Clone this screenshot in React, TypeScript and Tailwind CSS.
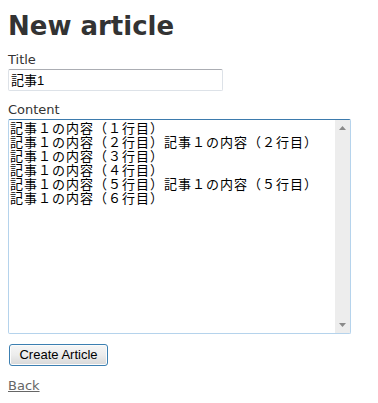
const lines = [
  "記事１の内容（１行目）",
  "記事１の内容（２行目）記事１の内容（２行目）",
  "記事１の内容（３行目）",
  "記事１の内容（４行目）",
  "記事１の内容（５行目）記事１の内容（５行目）",
  "記事１の内容（６行目）",
];

function ScrollArrow({ up }: { up: boolean }) {
  return (
    <svg width="7" height="4" viewBox="0 0 7 4" className="block">
      {up ? <path d="M3.5 0 L7 4 L0 4 Z" fill="#8a8a8a" /> : <path d="M0 0 L7 0 L3.5 4 Z" fill="#8a8a8a" />}
    </svg>
  );
}

export default function App() {
  return (
    <div
      className="w-[378px] h-[403px] bg-white text-[#333] text-[13px] leading-[18px] pl-2 overflow-hidden"
      style={{ fontFamily: '"DejaVu Sans", Verdana, sans-serif' }}
    >
      <h1 className="mt-[17px] h-[18px] text-[26px] leading-[18px] font-bold">New article</h1>

      {/* Title field */}
      <div className="mt-[16px]">
        <div className="h-[18px]">Title</div>
        <div
          className="w-[215px] h-[22px] border border-[#dde2e8] border-t-[#abadb3] rounded-[2px] px-[2px] text-[13px] leading-[21px] text-black"
          style={{ fontFamily: '"Liberation Sans", "Noto Sans CJK JP", sans-serif' }}
        >
          記事1
        </div>
      </div>

      {/* Content field */}
      <div className="mt-[10px]">
        <div className="h-[18px]">Content</div>
        <div className="w-[343px] h-[215px] border border-[#b5d3ec] border-t-[#3d7bad] rounded-[2px] flex">
          <div
            className="flex-1 pl-[1px] pt-[1px] text-[13px] leading-[14px] tracking-[1px] text-black whitespace-pre"
            style={{ fontFamily: '"Noto Sans CJK JP", monospace' }}
          >
            {lines.map((l, i) => (
              <div key={i} className="h-[14px]">{l}</div>
            ))}
          </div>
          <div className="w-[16px] bg-[#ededed] border-l border-white flex flex-col items-center justify-between py-[6px]">
            <ScrollArrow up />
            <ScrollArrow up={false} />
          </div>
        </div>
      </div>

      {/* Submit */}
      <div className="mt-[10px] ml-px">
        <button
          className="w-[99px] h-[22px] rounded-[3px] border border-[#3c7fb1] bg-gradient-to-b from-[#f6f6f6] via-[#ececec] to-[#d8d8d8] text-[13px] text-black shadow-[inset_0_0_0_1px_#fcfcfc]"
          style={{ fontFamily: '"Liberation Sans", Arial, sans-serif' }}
        >
          Create Article
        </button>
      </div>

      <div className="mt-[11px] h-[18px]">
        <a href="#" className="text-[#666] underline">Back</a>
      </div>
    </div>
  );
}
